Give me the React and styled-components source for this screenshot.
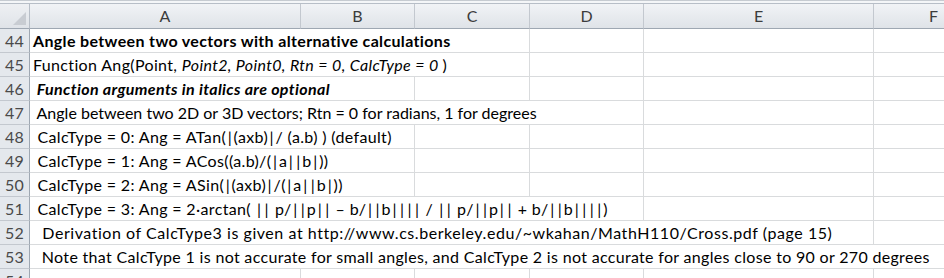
import React from 'react'
import styled, { createGlobalStyle } from 'styled-components'

const GlobalStyle = createGlobalStyle`
  body {
    margin: 0;
    background: #ffffff;
    overflow: hidden;
  }
`

const COLS = [271, 114, 115, 114, 230, 120]
const LETTERS = ['A', 'B', 'C', 'D', 'E', 'F']
const template = `30px ${COLS.map((w) => w + 'px').join(' ')}`

const Sheet = styled.div`
  width: 944px;
  height: 278px;
  overflow: hidden;
  font-family: Lato, 'Open Sans', sans-serif;
  font-size: 16px;
  color: #000;
  border-top: 1px solid #c6cbd1;
`

const TopStrip = styled.div`
  height: 2px;
  background: #f4f6f8;
  border-bottom: 1px solid #b7bec7;
`

const HeaderRow = styled.div`
  display: grid;
  grid-template-columns: ${template};
  height: 25px;
`

const Corner = styled.div`
  box-sizing: border-box;
  border-right: 1px solid #b7bec7;
  border-bottom: 1px solid #9ea7b2;
  background: linear-gradient(#eef0f3, #dfe3e8);
  position: relative;

  &::after {
    content: '';
    position: absolute;
    right: 3px;
    bottom: 3px;
    border-style: solid;
    border-width: 0 0 13px 13px;
    border-color: transparent transparent #c8ccd2 transparent;
  }
`

const ColHead = styled.div`
  box-sizing: border-box;
  border-right: 1px solid #c3c8cf;
  border-bottom: 1px solid #9ea7b2;
  background: linear-gradient(#f1f3f6, #dfe3e8);
  display: flex;
  align-items: center;
  justify-content: center;
  color: #3c3c3c;
  font-size: 16px;
  line-height: 1;
`

const Row = styled.div`
  display: grid;
  grid-template-columns: ${template};
  height: 24px;
`

const RowHead = styled.div`
  box-sizing: border-box;
  border-right: 1px solid #9ea7b2;
  border-bottom: 1px solid #c3c8cf;
  background: #e4e8ed;
  color: #4a4a4a;
  font-size: 16px;
  letter-spacing: 0.3px;
  display: flex;
  align-items: flex-end;
  justify-content: center;
  padding-bottom: 3px;
  line-height: 1;
`

const Cell = styled.div`
  box-sizing: border-box;
  grid-column: span ${(p) => p.$span || 1};
  border-right: 1px solid #d9dbdd;
  border-bottom: 1px solid #d9dbdd;
  padding-left: 3px;
  white-space: pre;
  overflow: hidden;
  display: flex;
  align-items: flex-end;
  padding-bottom: 3px;
  line-height: 1;
  letter-spacing: ${(p) => p.$spacing ?? 0.35}px;
  font-weight: ${(p) => (p.$bold ? 700 : 400)};
  font-style: ${(p) => (p.$italic ? 'italic' : 'normal')};
`

const I = styled.span`
  font-style: italic;
`

// Calibri's bar is much wider than Lato's, so give each one some room
const Pipe = styled.span`
  padding: 0 1.6px;
`

const withPipes = (str) =>
  str.split('|').flatMap((part, i) =>
    i === 0 ? [part] : [<Pipe key={i}>|</Pipe>, part]
  )

const rows = [
  { n: 44, span: 3, bold: true, text: 'Angle between two vectors with alternative calculations' },
  {
    n: 45,
    span: 3,
    text: (
      <>
        Function Ang(Point, <I>Point2, Point0, Rtn = 0, CalcType = 0 </I>)
      </>
    ),
  },
  { n: 46, span: 2, bold: true, italic: true, text: ' Function arguments in italics are optional' },
  { n: 47, span: 4, spacing: 0, text: ' Angle between two 2D or 3D vectors; Rtn = 0 for radians, 1 for degrees' },
  { n: 48, span: 2, text: withPipes(' CalcType = 0: Ang = ATan(|(axb)|/ (a.b) ) (default)') },
  { n: 49, span: 2, text: withPipes(' CalcType = 1: Ang = ACos((a.b)/(|a||b|))') },
  { n: 50, span: 2, text: withPipes(' CalcType = 2: Ang = ASin(|(axb)|/(|a||b|))') },
  { n: 51, span: 4, text: withPipes(' CalcType = 3: Ang = 2·arctan( || p/||p|| – b/||b|| || / || p/||p|| + b/||b|| ||)') },
  { n: 52, span: 5, spacing: 0.55, text: '  Derivation of CalcType3 is given at http://www.cs.berkeley.edu/~wkahan/MathH110/Cross.pdf (page 15)' },
  { n: 53, span: 6, spacing: 0.32, text: '  Note that CalcType 1 is not accurate for small angles, and CalcType 2 is not accurate for angles close to 90 or 270 degrees' },
]

const fillers = (span) =>
  COLS.slice(span).map((_, i) => <Cell key={'f' + i} />)

const App = () => {
  return (
    <>
      <GlobalStyle />
      <Sheet>
        <TopStrip />
        <HeaderRow>
          <Corner />
          {LETTERS.map((l) => (
            <ColHead key={l}>{l}</ColHead>
          ))}
        </HeaderRow>
        {rows.map((r) => (
          <Row key={r.n}>
            <RowHead>{r.n}</RowHead>
            <Cell $span={r.span} $bold={r.bold} $italic={r.italic} $spacing={r.spacing}>
              {r.text}
            </Cell>
            {fillers(r.span)}
          </Row>
        ))}
        <Row>
          <RowHead>54</RowHead>
          {COLS.map((_, i) => (
            <Cell key={i} />
          ))}
        </Row>
      </Sheet>
    </>
  )
}

export default App
